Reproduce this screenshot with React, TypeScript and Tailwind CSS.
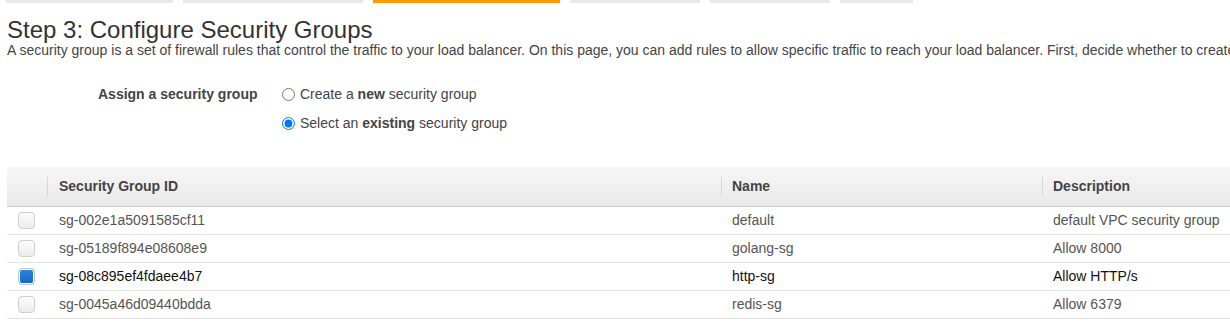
import React, { useState } from 'react';

interface SecurityGroup {
  id: string;
  name: string;
  description: string;
}

const groups: SecurityGroup[] = [
  { id: 'sg-002e1a5091585cf11', name: 'default', description: 'default VPC security group' },
  { id: 'sg-05189f894e08608e9', name: 'golang-sg', description: 'Allow 8000' },
  { id: 'sg-08c895ef4fdaee4b7', name: 'http-sg', description: 'Allow HTTP/s' },
  { id: 'sg-0045a46d09440bdda', name: 'redis-sg', description: 'Allow 6379' },
];

const steps = [
  { w: 'w-[167px]', active: false },
  { w: 'w-[180px]', active: false },
  { w: 'w-[187px]', active: true },
  { w: 'w-[130px]', active: false },
  { w: 'w-[120px]', active: false },
  { w: 'w-[73px]', active: false },
];

const Checkbox: React.FC<{ checked: boolean; onClick: () => void }> = ({ checked, onClick }) => (
  <button
    onClick={onClick}
    className={`w-[17px] h-[17px] rounded-[4px] border ${
      checked
        ? 'bg-gradient-to-b from-[#2f86dd] to-[#1565c0] border-[#b9c9da] shadow-[inset_0_0_0_1px_#ffffff]'
        : 'bg-gradient-to-b from-[#fbfbfb] to-[#ececec] border-[#cfcfcf]'
    }`}
  />
);

export default function App() {
  const [mode, setMode] = useState<'new' | 'existing'>('existing');
  const [selected, setSelected] = useState<string>('sg-08c895ef4fdaee4b7');

  return (
    <div className="w-[1230px] h-[327px] overflow-hidden bg-white font-['Liberation_Sans',Arial,sans-serif] text-[#444]">
      {/* Wizard step bar */}
      <div className="flex gap-[10px] pl-[6px]">
        {steps.map((s, i) => (
          <div key={i} className={`${s.w} h-[3px] ${s.active ? 'bg-[#ff9900]' : 'bg-[#e8e8e8]'}`} />
        ))}
      </div>

      <div className="pl-[7px]">
        <h1 className="mt-[16px] text-[24px] leading-[22px] text-[#333] whitespace-nowrap">
          Step 3: Configure Security Groups
        </h1>
        <p className="mt-[2px] text-[14px] leading-[14px] text-[#444] whitespace-nowrap">
          A security group is a set of firewall rules that control the traffic to your load balancer. On this page, you can add rules to allow specific traffic to reach your load balancer. First, decide whether to create a new security group or select an existing one.
        </p>

        {/* Assign a security group */}
        <div className="mt-[23px] flex text-[14px]">
          <div className="w-[275px] pl-[91px] h-[29px] flex items-center font-bold text-[#444]">
            Assign a security group
          </div>
          <div className="flex flex-col">
            <label className="h-[29px] flex items-center gap-[5px] cursor-pointer">
              <input
                type="radio"
                name="sg"
                checked={mode === 'new'}
                onChange={() => setMode('new')}
                className="w-[13px] h-[13px]"
              />
              <span>
                Create a <b>new</b> security group
              </span>
            </label>
            <label className="h-[29px] flex items-center gap-[5px] cursor-pointer">
              <input
                type="radio"
                name="sg"
                checked={mode === 'existing'}
                onChange={() => setMode('existing')}
                className="w-[13px] h-[13px]"
              />
              <span>
                Select an <b>existing</b> security group
              </span>
            </label>
          </div>
        </div>

        {/* Table */}
        <div className="mt-[29px] text-[14px]">
          <div className="grid grid-cols-[40px_674px_321px_1fr] h-[40px] bg-gradient-to-b from-[#f6f6f6] to-[#e9e9e9] border-b border-[#cdcdcd] font-bold text-[#444]">
            <div />
            <div className="flex items-center">
              <div className="w-px h-[19px] bg-[#d6d6d6] mr-[11px]" />
              Security Group ID
            </div>
            <div className="flex items-center">
              <div className="w-px h-[19px] bg-[#d6d6d6] mr-[10px]" />
              Name
            </div>
            <div className="flex items-center whitespace-nowrap">
              <div className="w-px h-[19px] bg-[#d6d6d6] mr-[10px]" />
              Description
            </div>
          </div>

          {groups.map((g) => {
            const isSel = g.id === selected;
            return (
              <div
                key={g.id}
                className={`grid grid-cols-[40px_674px_321px_1fr] h-[28px] border-b border-[#e1e1e1] items-center ${
                  isSel ? 'text-[#111]' : 'text-[#555]'
                }`}
              >
                <div className="flex pl-[11px]">
                  <Checkbox checked={isSel} onClick={() => setSelected(g.id)} />
                </div>
                <div className="pl-[12px]">{g.id}</div>
                <div className="pl-[11px]">{g.name}</div>
                <div className="pl-[11px] whitespace-nowrap">{g.description}</div>
              </div>
            );
          })}
        </div>
      </div>
    </div>
  );
}
